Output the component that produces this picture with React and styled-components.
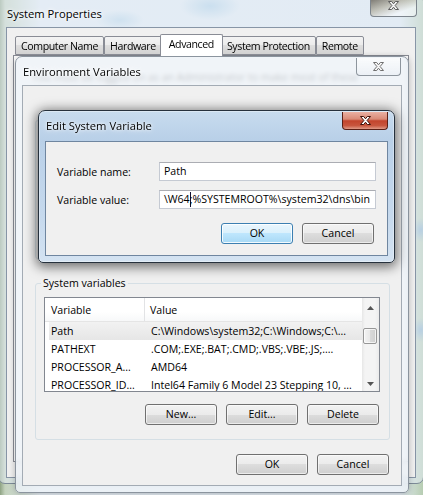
import React from 'react'
import styled, { createGlobalStyle, css } from 'styled-components'

const GlobalStyle = createGlobalStyle`
  html, body {
    margin: 0;
    padding: 0;
  }
  body {
    width: 423px;
    height: 495px;
    overflow: hidden;
    font-family: 'Segoe UI', 'Open Sans', 'Noto Sans', sans-serif;
    font-size: 10.6px;
    color: #000;
  }
  * {
    box-sizing: border-box;
  }
`

const Desktop = styled.div`
  position: relative;
  width: 423px;
  height: 495px;
  overflow: hidden;
  background:
    radial-gradient(ellipse 30px 14px at 210px 6px, rgba(120, 180, 220, 0.5), transparent),
    radial-gradient(ellipse 24px 10px at 120px 20px, rgba(120, 180, 220, 0.4), transparent),
    radial-gradient(ellipse 8px 12px at 421px 230px, rgba(110, 160, 215, 0.7), transparent),
    radial-gradient(ellipse 8px 12px at 421px 330px, rgba(110, 160, 215, 0.7), transparent),
    linear-gradient(90deg, #8ea383 0, #c3d2bd 5px, #e6eef5 40px, #e3ecf4 400px, #b7cdb2 423px);
`

const frames = {
  main: css`
    background: rgba(226, 235, 244, 0.55);
    border: 1px solid #7d8b98;
    border-radius: 7px;
  `,
  inactive: css`
    background: rgba(236, 241, 246, 0.8);
    border: 1px solid #8b949e;
    border-radius: 7px 7px 5px 5px;
    backdrop-filter: blur(2px);
    box-shadow: 0 1px 6px rgba(0, 0, 0, 0.25);
  `,
  active: css`
    background: linear-gradient(180deg, #c8dcef 0, #b9d0e8 28px, #c6d9ed 70%, #d4e3f2 100%);
    border: 1px solid #26313d;
    border-radius: 7px 7px 5px 5px;
    box-shadow: 0 0 0 1px rgba(255, 255, 255, 0.35) inset, 0 2px 12px 2px rgba(0, 0, 0, 0.55);
  `,
}

// windows sit on a free desktop, so they are placed by coordinates
const Window = styled.section`
  position: absolute;
  left: ${p => p.$x}px;
  top: ${p => p.$y}px;
  width: ${p => p.$w}px;
  height: ${p => p.$h}px;
  display: flex;
  flex-direction: column;
  padding: 0 ${p => p.$pad}px ${p => p.$padB}px;
  ${p => frames[p.$kind]}
`

const TitleBar = styled.div`
  height: ${p => p.$h}px;
  flex: none;
  display: flex;
  align-items: flex-start;
`

const Title = styled.div`
  margin: ${p => p.$top}px 0 0 1px;
  line-height: 16px;
  font-size: 11.2px;
  text-shadow: 0 0 6px #fff, 0 0 3px #fff;
`

const closeKinds = {
  red: css`
    background: linear-gradient(180deg, #eab0a2 0%, #d98a77 42%, #c3442c 52%, #c8563e 80%, #e09b88 100%);
    border: 1px solid #5a1f15;
  `,
  plain: css`
    background: linear-gradient(180deg, rgba(255, 255, 255, 0.7), rgba(232, 238, 244, 0.5));
    border: 1px solid #8d959d;
  `,
  dark: css`
    background: linear-gradient(160deg, rgba(60, 52, 40, 0.75) 0, rgba(150, 140, 110, 0.45) 45%, rgba(255, 255, 255, 0.45) 75%);
    border: 1px solid #7d858d;
  `,
}

const CloseButton = styled.div`
  margin: ${p => p.$top}px ${p => p.$right}px 0 auto;
  width: ${p => p.$w}px;
  height: ${p => p.$h}px;
  border-radius: 0 0 4px 4px;
  display: flex;
  align-items: center;
  justify-content: center;
  ${p => closeKinds[p.$kind]}
  border-top: none;
`

const XGlyph = ({ fill, stroke }) => (
  <svg width="13" height="11" viewBox="0 0 13 11">
    <path
      d="M1.5 1.5h3.2l1.8 2.3 1.8-2.3h3.2l-3.4 4 3.4 4H8.3L6.5 7.2 4.7 9.5H1.5l3.4-4z"
      fill={fill}
      stroke={stroke}
      strokeWidth="1"
      strokeLinejoin="round"
    />
  </svg>
)

const Client = styled.div`
  flex: 1;
  min-height: 0;
  display: flex;
  flex-direction: column;
  background: #f0f0f0;
  border: 1px solid ${p => p.$edge};
  padding: ${p => p.$pad};
`

/* System Properties tabs */
const TabStrip = styled.div`
  display: flex;
  align-items: flex-end;
  padding-left: 2px;
  height: 21px;
  flex: none;
  margin-top: 6px;
  position: relative;
  z-index: 1;
`

const Tab = styled.div`
  height: ${p => (p.$active ? 22 : 19)}px;
  margin: ${p => (p.$active ? '0 -2px -1px' : '0')};
  padding: ${p => (p.$active ? '1px 8px 0' : '1px 5px 0')};
  border: 1px solid #898c95;
  border-bottom: ${p => (p.$active ? 'none' : '1px solid #898c95')};
  border-radius: 2px 2px 0 0;
  background: ${p =>
    p.$active ? '#fff' : 'linear-gradient(180deg, #f3f3f3 0%, #ebebeb 50%, #dedede 50%, #d2d2d2 100%)'};
  white-space: nowrap;
  line-height: 16px;
  letter-spacing: -0.4px;
  position: relative;
  z-index: ${p => (p.$active ? 2 : 1)};
`

const TabPage = styled.div`
  flex: 1;
  margin-bottom: 15px;
  border: 1px solid #898c95;
  background: #fff;
  padding: 14px 12px 0 18px;
  color: #1d1d1d;
`

/* Environment Variables */
const Group = styled.fieldset`
  margin: ${p => p.$top}px 0 0;
  padding: 7px 9px 14px 8px;
  border: 1px solid #d5dfe5;
  border-radius: 3px;
  height: ${p => (p.$h ? `${p.$h}px` : 'auto')};
  flex: none;
  min-width: 0;
`

const Legend = styled.legend`
  margin-left: -3px;
  padding: 0 2px;
  line-height: 14px;
`

const ListBox = styled.div`
  height: ${p => p.$h}px;
  border: 1px solid #828790;
  background: #fff;
  display: grid;
  grid-template-columns: 1fr 17px;
  overflow: hidden;
`

const ListBody = styled.div`
  display: flex;
  flex-direction: column;
  min-width: 0;
`

const Header = styled.div`
  height: 24px;
  flex: none;
  display: grid;
  grid-template-columns: 100px 1fr;
  border-bottom: 1px solid #e5e5e5;
  background: linear-gradient(180deg, #fff 0%, #fff 60%, #f7f8f9 100%);
`

const HeadCell = styled.div`
  padding: 5px 0 0 ${p => p.$indent}px;
  line-height: 15px;
  border-right: ${p => (p.$divider ? '1px solid #e2e3e5' : 'none')};
`

const Row = styled.div`
  height: 18px;
  flex: none;
  margin-left: 4px;
  display: grid;
  grid-template-columns: 96px 1fr;
  align-items: center;
  background: ${p => (p.$selected ? 'linear-gradient(180deg, #f2f2f2, #e6e6e6)' : 'transparent')};
`

const Cell = styled.div`
  padding-left: ${p => p.$indent}px;
  white-space: nowrap;
  overflow: hidden;
  line-height: 15px;
`

const ScrollBar = styled.div`
  display: flex;
  flex-direction: column;
  background: linear-gradient(90deg, #e7e7e7 0, #f4f4f4 3px, #f4f4f4 13px, #ebebeb 100%);
`

const ScrollArrow = styled.div`
  height: 20px;
  flex: none;
  display: flex;
  align-items: center;
  justify-content: center;
`

const ScrollTrack = styled.div`
  flex: 1;
  padding: ${p => p.$offset}px 1px 0 1px;
`

const Thumb = styled.div`
  width: 14px;
  height: 16px;
  border: 1px solid #979797;
  border-radius: 2px;
  background: linear-gradient(90deg, #f3f3f3 0%, #e8e8e8 50%, #d9d9d9 51%, #cfcfcf 100%);
  box-shadow: inset 0 0 0 1px rgba(255, 255, 255, 0.7);
`

const Arrow = ({ up }) => (
  <svg width="7" height="4" viewBox="0 0 7 4">
    <path d={up ? 'M0 4L3.5 0 7 4z' : 'M0 0L3.5 4 7 0z'} fill="#555" />
  </svg>
)

const ButtonRow = styled.div`
  display: flex;
  justify-content: flex-end;
  gap: 9px;
  margin: ${p => p.$top}px ${p => p.$right}px 0 0;
  flex: none;
`

const Button = styled.div`
  width: 72px;
  height: 21px;
  border: 1px solid ${p => (p.$primary ? '#3c7fb1' : '#707070')};
  border-radius: 3px;
  background: ${p =>
    p.$primary
      ? 'linear-gradient(180deg, #eaf6fd 0%, #d9f0fc 50%, #bee6fd 50%, #a7d9f5 100%)'
      : 'linear-gradient(180deg, #f2f2f2 0%, #ebebeb 50%, #dddddd 50%, #cfcfcf 100%)'};
  box-shadow: inset 0 0 0 1px ${p => (p.$primary ? 'rgba(255, 255, 255, 0.85)' : 'rgba(255, 255, 255, 0.6)')};
  display: flex;
  align-items: center;
  justify-content: center;
  line-height: 15px;
`

/* Edit System Variable */
const Form = styled.div`
  display: grid;
  grid-template-columns: 102px 1fr;
  row-gap: 9px;
  align-items: center;
`

const Field = styled.div`
  height: 19px;
  border: 1px solid #c5cad3;
  border-top-color: #abadb3;
  background: #fff;
  padding: 0 5px 0 ${p => (p.$end ? 0 : 4)}px;
  display: flex;
  align-items: center;
  justify-content: ${p => (p.$end ? 'flex-end' : 'flex-start')};
  overflow: hidden;
  white-space: nowrap;
  line-height: 15px;
`

const Caret = styled.span`
  display: inline-block;
  flex: none;
  width: 1px;
  height: 15px;
  margin-right: -1px;
  background: #101030;
`

const systemVars = [
  ['Path', 'C:\\Windows\\system32;C:\\Windows;C:\\...', true],
  ['PATHEXT', '.COM;.EXE;.BAT;.CMD;.VBS;.VBE;.JS;....'],
  ['PROCESSOR_A...', 'AMD64'],
  ['PROCESSOR_ID...', 'Intel64 Family 6 Model 23 Stepping 10, ...'],
]

const VarList = ({ rows, height, thumbOffset }) => (
  <ListBox $h={height}>
    <ListBody>
      <Header>
        <HeadCell $indent={6} $divider>Variable</HeadCell>
        <HeadCell $indent={5}>Value</HeadCell>
      </Header>
      {rows.map(([name, value, selected]) => (
        <Row key={name} $selected={selected}>
          <Cell $indent={2}>{name}</Cell>
          <Cell $indent={6}>{value}</Cell>
        </Row>
      ))}
    </ListBody>
    <ScrollBar>
      <ScrollArrow>
        <Arrow up />
      </ScrollArrow>
      <ScrollTrack $offset={thumbOffset}>
        <Thumb />
      </ScrollTrack>
      <ScrollArrow>
        <Arrow />
      </ScrollArrow>
    </ScrollBar>
  </ListBox>
)

// the user group lies under the Edit dialog; only its box is kept
const EmptyList = styled.div`
  height: 80px;
  border: 1px solid #828790;
  background: #fff;
`

const tabs = ['Computer Name', 'Hardware', 'Advanced', 'System Protection', 'Remote']

export default function App() {
  return (
    <Desktop>
      <GlobalStyle />

      <Window $kind="main" $x={-2} $y={-6} $w={426} $h={490} $pad={7} $padB={5}>
        <TitleBar $h={32}>
          <Title $top={11}>System Properties</Title>
          <CloseButton $kind="dark" $top={0} $right={-1} $w={47} $h={22}>
            <XGlyph fill="#f2f2f2" stroke="#5d5d5d" />
          </CloseButton>
        </TitleBar>
        <Client $edge="#8795a6" $pad="0 6px">
          <TabStrip>
            {tabs.map(t => (
              <Tab key={t} $active={t === 'Advanced'}>
                {t}
              </Tab>
            ))}
          </TabStrip>
          <TabPage>You must be logged on as an Administrator to make most of these changes.</TabPage>
        </Client>
      </Window>

      <Window $kind="inactive" $x={15} $y={56} $w={394} $h={437} $pad={6} $padB={6}>
        <TitleBar $h={28}>
          <Title $top={7}>Environment Variables</Title>
          <CloseButton $kind="plain" $top={1} $right={1} $w={45} $h={18}>
            <XGlyph fill="#f7f7f7" stroke="#707070" />
          </CloseButton>
        </TitleBar>
        <Client $edge="#a3abb4" $pad="0 11px 0 12px">
          <Group $top={27} $h={146}>
            <Legend>User variables for Owner</Legend>
            <EmptyList />
          </Group>
          <Group $top={17}>
            <Legend>System variables</Legend>
            <VarList rows={systemVars} height={95} thumbOffset={10} />
            <ButtonRow $top={12} $right={1}>
              <Button>New...</Button>
              <Button>Edit...</Button>
              <Button>Delete</Button>
            </ButtonRow>
          </Group>
          <ButtonRow $top={14} $right={1}>
            <Button>OK</Button>
            <Button>Cancel</Button>
          </ButtonRow>
        </Client>
      </Window>

      <Window $kind="active" $x={38} $y={110} $w={357} $h={153} $pad={6} $padB={6}>
        <TitleBar $h={30}>
          <Title $top={7}>Edit System Variable</Title>
          <CloseButton $kind="red" $top={1} $right={0} $w={46} $h={18}>
            <XGlyph fill="#fff" stroke="#3e1008" />
          </CloseButton>
        </TitleBar>
        <Client $edge="#6f86a0" $pad="20px 11px 0">
          <Form>
            <span>Variable name:</span>
            <Field>Path</Field>
            <span>Variable value:</span>
            <Field $end>
              <span>\W64</span>
              <Caret />
              <span>;%SYSTEMROOT%\system32\dns\bin</span>
            </Field>
          </Form>
          <ButtonRow $top={14} $right={2}>
            <Button $primary>OK</Button>
            <Button>Cancel</Button>
          </ButtonRow>
        </Client>
      </Window>
    </Desktop>
  )
}
